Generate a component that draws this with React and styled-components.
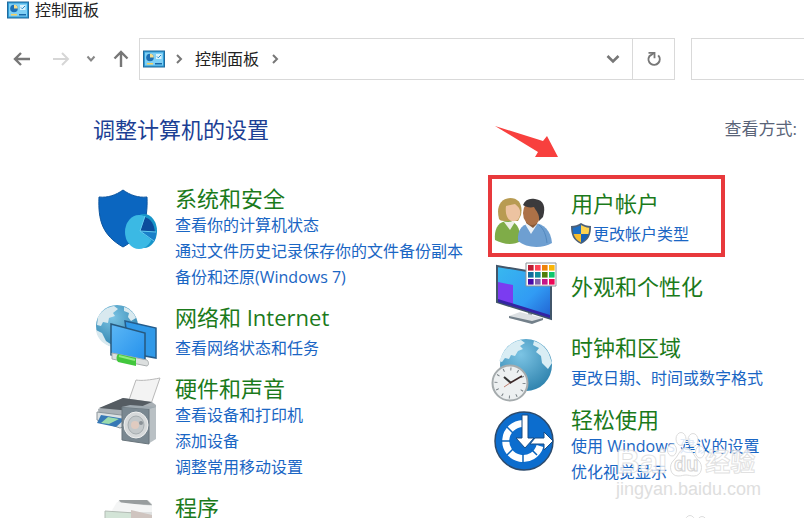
import React from "react";
import styled, { createGlobalStyle } from "styled-components";

const leftItems = [
  {
    id: "security",
    title: "系统和安全",
    icon: ShieldIcon,
    links: [
      "查看你的计算机状态",
      "通过文件历史记录保存你的文件备份副本",
      "备份和还原(Windows 7)",
    ],
  },
  {
    id: "network",
    title: "网络和 Internet",
    icon: NetworkIcon,
    links: ["查看网络状态和任务"],
  },
  {
    id: "hardware",
    title: "硬件和声音",
    icon: PrinterIcon,
    links: ["查看设备和打印机", "添加设备", "调整常用移动设置"],
  },
  { id: "programs", title: "程序", icon: ProgramsIcon, links: [] },
];

const rightItems = [
  {
    id: "users",
    title: "用户帐户",
    icon: UsersIcon,
    links: ["更改帐户类型"],
    admin: true,
    marked: true,
  },
  { id: "looks", title: "外观和个性化", icon: DisplayIcon, links: [] },
  {
    id: "clock",
    title: "时钟和区域",
    icon: ClockIcon,
    links: ["更改日期、时间或数字格式"],
  },
  {
    id: "ease",
    title: "轻松使用",
    icon: EaseIcon,
    links: ["使用 Windows 建议的设置", "优化视觉显示"],
  },
];

export default function App() {
  return (
    <Window>
      <GlobalStyle />
      <TitleBar>
        <PanelIcon />
        <span>控制面板</span>
      </TitleBar>
      <Toolbar>
        <NavButtons>
          <NavButton aria-label="后退">
            <svg width="22" height="16" viewBox="0 0 22 16">
              <path d="M17 8H2M8 2L2 8l6 6" stroke="#777" strokeWidth="2.4" fill="none" />
            </svg>
          </NavButton>
          <NavButton aria-label="前进" disabled>
            <svg width="18" height="16" viewBox="0 0 18 16">
              <path d="M1 8h15M10 2l6 6-6 6" stroke="#d6d6d6" strokeWidth="2" fill="none" />
            </svg>
          </NavButton>
          <NavButton aria-label="最近位置">
            <svg width="10" height="8" viewBox="0 0 10 8">
              <path d="M1.5 1.5L5 5.5l3.5-4" stroke="#888" strokeWidth="2" fill="none" />
            </svg>
          </NavButton>
          <NavButton aria-label="向上">
            <svg width="16" height="18" viewBox="0 0 16 18">
              <path d="M8 17V2M1.5 8.5L8 2l6.5 6.5" stroke="#777" strokeWidth="2.4" fill="none" />
            </svg>
          </NavButton>
        </NavButtons>
        <AddressBar>
          <PanelIcon />
          <Crumb />
          <CrumbButton>控制面板</CrumbButton>
          <Crumb />
          <DropButton aria-label="展开地址">
            <svg width="14" height="10" viewBox="0 0 14 10">
              <path d="M1.5 2L7 7.5 12.5 2" stroke="#777" strokeWidth="2.6" fill="none" />
            </svg>
          </DropButton>
          <RefreshButton aria-label="刷新">
            <svg width="16" height="16" viewBox="0 0 16 16">
              <path d="M12.2 4.4A5.6 5.6 0 1 1 3.4 5.2L8 2" stroke="#777" strokeWidth="2" fill="none" />
              <path d="M2.5 1.8h6v5.4" stroke="#777" strokeWidth="1.8" fill="none" />
            </svg>
          </RefreshButton>
        </AddressBar>
        <Search type="search" aria-label="搜索控制面板" />
      </Toolbar>
      <Content>
        <Header>
          <h1>调整计算机的设置</h1>
          <span>查看方式:</span>
        </Header>
        <Columns>
          <Column $gap="14px">
            {leftItems.map((item) => (
              <Item key={item.id} item={item} />
            ))}
          </Column>
          <Column $gap="15px" $top="5px" $center>
            {rightItems.map((item) => (
              <Item key={item.id} item={item} />
            ))}
          </Column>
        </Columns>
      </Content>
      <Watermark />
    </Window>
  );
}

function Item({ item }) {
  const Icon = item.icon;
  return (
    <Category>
      <Icon />
      <CategoryText $titleOnly={!item.links.length}>
        <CategoryTitle href="#" $spaced={item.links.length === 1}>
          {item.title}
        </CategoryTitle>
        {item.links.map((l) => (
          <TaskLink key={l} href="#">
            {item.admin && <UacShield />}
            {l}
          </TaskLink>
        ))}
      </CategoryText>
      {item.marked && (
        <>
          <Frame />
          <Arrow viewBox="0 0 66 34">
            <path d="M1 1L49 16 53 11 64 32 41 32 44 27Z" fill="#f8403e" />
          </Arrow>
        </>
      )}
    </Category>
  );
}

function Crumb() {
  return (
    <CrumbArrow viewBox="0 0 8 12">
      <path d="M2 2l4 4-4 4" stroke="#777" strokeWidth="2" fill="none" />
    </CrumbArrow>
  );
}

function PanelIcon() {
  return (
    <svg width="22" height="18" viewBox="0 0 22 18">
      <rect x=".5" y="1" width="21" height="16" fill="#2f9bd6" stroke="#216a9c" />
      <rect x="2" y="2.5" width="18" height="13" fill="#7fd0f5" />
      <circle cx="7" cy="7.5" r="3.8" fill="#1d6fb5" />
      <path d="M7 7.5V3.7a3.8 3.8 0 0 1 3.8 3.8z" fill="#f6dc8a" />
      <rect x="13" y="4" width="5.5" height="5" fill="#d9f2fd" />
      <path d="M14 6.5l1.3 1.3L18 5" stroke="#2489c9" fill="none" />
      <rect x="4" y="13" width="6" height="1.5" fill="#f3cf62" />
      <rect x="12" y="13" width="7" height="1.5" fill="#1869a8" />
    </svg>
  );
}

function UacShield() {
  return (
    <svg width="20" height="22" viewBox="0 0 20 22">
      <path d="M10 0C7 2 4 3 0 3c0 9 2 14 10 18 8-4 10-9 10-18-4 0-7-1-10-3z" fill="#4d6078" />
      <path d="M10 2C7.500 3.500 5 4.500 1.800 4.700c0 2.300.2 4.300.8 6.300H10z" fill="#1e6fc4" />
      <path d="M10 2c2.500 1.500 5 2.500 8.200 2.700 0 2.300-.2 4.300-.8 6.300H10z" fill="#ffd34f" />
      <path d="M2.600 11c1.100 3.700 3.300 6.500 7.400 8.500V11z" fill="#f9bd2c" />
      <path d="M17.400 11c-1.100 3.700-3.300 6.500-7.400 8.500V11z" fill="#1962b4" />
    </svg>
  );
}

function ShieldIcon() {
  return (
    <CategoryIcon viewBox="0 0 66 57">
      <path
        d="M30 5C23 10 15 13 6 12c-1 23 3 38 24 50 20-11 25-27 24-50-9 1-17-2-24-7z"
        fill="#0b66c0"
        stroke="#0c559f"
      />
      <ellipse cx="51" cy="46" rx="13" ry="17" fill="#1795c9" />
      <ellipse cx="46" cy="47" rx="14" ry="17" fill="#3bb9e4" />
      <path d="M47 46l5-14c6 2 9 7 10 15z" fill="#0c4c9c" />
      <path d="M47 46l16 1c0 4-1 7-2 10z" fill="#1a7fc8" />
      <path d="M52 31l-5 15 14 10M47 46l16 1" stroke="#62c9ee" fill="none" />
    </CategoryIcon>
  );
}

function NetworkIcon() {
  return (
    <CategoryIcon viewBox="0 0 66 57">
      <defs>
        <radialGradient id="globe" cx=".4" cy=".3" r=".8">
          <stop offset="0" stopColor="#7cc4e4" />
          <stop offset="1" stopColor="#287da9" />
        </radialGradient>
        <linearGradient id="screen" x1="0" y1="0" x2="1" y2="1">
          <stop offset="0" stopColor="#5cb7f5" />
          <stop offset="1" stopColor="#2390ec" />
        </linearGradient>
      </defs>
      <circle cx="24" cy="22" r="21" fill="url(#globe)" />
      <path d="M5 13C9 6 15 3 21 2l4 3-5 4 2 3-6 2-1 5-5-1-2 4-4-1zM31 3c6 2 10 6 12 11l-5 3-3-4 1-4-5-2zM3 26l6 3 4 8 6 4v2C11 41 4 35 3 26z" fill="#d8e9ef" />
      <path d="M32 17l31 7v30l-27-5z" fill="#3099e8" stroke="#255c8b" strokeWidth="1.5" />
      <path d="M18 20l34 9v29l-34-7z" fill="url(#screen)" stroke="#27587d" strokeWidth="1.5" />
      <path d="M19 49l35 7c2 2 2 5 0 6l-35-7z" fill="#dcdfdf" stroke="#a9aeaf" />
      <path d="M25 50l18 4v8l-18-4c-2-2-2-6 0-8z" fill="#42c73d" />
      <path d="M26 52l16 4" stroke="#91ed7e" strokeWidth="2" />
    </CategoryIcon>
  );
}

function PrinterIcon() {
  return (
    <CategoryIcon viewBox="0 0 66 57">
      <path d="M43 5c6 1 14 0 24-2L58 29 36 25z" fill="#f3f3f3" stroke="#b9b9b9" />
      <path d="M5 34l25-11 29 4 4 3v16L36 51 6 44z" fill="#a9b0b5" />
      <path d="M6 33l24-10 29 4-21 9z" fill="#555c62" />
      <path d="M4 37l32 4v9l-9 3-23-8z" fill="#dce1e3" stroke="#8b959b" />
      <path d="M8 40l24 4-9 8-19-4z" fill="#3678b5" />
      <path d="M15 42l11 2-10 5-8-1z" fill="#9bdbad" />
      <path d="M55 34l8-2v32l-8 5z" fill="#b9c0c4" />
      <path d="M29 32l27 2v35l-27-4z" fill="#7a8891" stroke="#69757c" />
      <path d="M29 32l8-2 26 2-7 2z" fill="#9ea9b0" />
      <ellipse cx="43" cy="50" rx="12" ry="13" fill="#d6d9da" stroke="#f0f1f1" />
      <ellipse cx="43" cy="50" rx="8" ry="9" fill="#c3c8ca" stroke="#a6adb0" />
      <circle cx="42" cy="50" r="4" fill="#e0cbc0" />
      <circle cx="48" cy="48" r="2" fill="#8a9196" />
    </CategoryIcon>
  );
}

function ProgramsIcon() {
  return (
    <CategoryIcon viewBox="0 0 66 57">
      <path d="M26 6h29l4 4v30H16z" fill="#dfe1e1" />
      <path d="M26 6h28l5 5-30-1z" fill="#989d9e" />
      <path d="M24 8l35 4v6H18z" fill="#f4f5f5" />
      <path d="M12 17l30 2v20H12z" fill="#d3e4d7" stroke="#b3bcb5" />
      <path d="M38 16l21 5v20H38z" fill="#cfc4bf" />
    </CategoryIcon>
  );
}

function UsersIcon() {
  return (
    <CategoryIcon viewBox="0 0 66 57">
      <path d="M6 50c-1-11 3-19 13-19 8 0 12 6 13 20-8 5-19 3-26-1z" fill="#7fac48" />
      <path d="M15 32l6 8 5-8z" fill="#eef0e6" />
      <path d="M10 29C7 17 11 9 21 8c9 0 13 7 11 17l-3 6H15c-3 0-4-1-5-2z" fill="#b89b52" />
      <path d="M17 16l9-2c4 3 6 6 5 11-1 5-4 7-8 6-5-1-7-8-6-15z" fill="#edc3a1" />
      <path d="M29 51c-1-12 5-18 15-18 11 0 18 8 19 20-10 6-26 5-34-2z" fill="#6e9fd1" />
      <path d="M36 34l6 10 7-11z" fill="#ecf2f7" />
      <path d="M38 29l11-2-1 7-4 4-7-5z" fill="#895a38" />
      <ellipse cx="43" cy="23" rx="9" ry="12" fill="#ac7147" />
      <path d="M34 15c2-5 6-7 12-6 9 1 11 8 8 18l-4 4c1-7-3-10-5-14-4 1-8 0-11-2z" fill="#3b3a3c" />
      <path d="M50 35c5 4 7 10 8 18" stroke="#5288be" fill="none" />
    </CategoryIcon>
  );
}

function DisplayIcon() {
  const colors = [
    "#bd1c32", "#ff4457", "#ee8208", "#f9b507",
    "#116c9d", "#108f9d", "#4e7e0c", "#10c66b",
    "#4607a8", "#8160aa", "#c41788", "#ed0757",
  ];
  return (
    <CategoryIcon viewBox="0 0 66 57">
      <defs>
        <linearGradient id="display" x1="0" y1="0" x2="1" y2="1">
          <stop offset="0" stopColor="#38b9ef" />
          <stop offset=".6" stopColor="#319bf4" />
          <stop offset="1" stopColor="#205fd0" />
        </linearGradient>
      </defs>
      <path d="M39 48l4-1v10h-4z" fill="#9ca7ae" />
      <path d="M20 54l11-4 23 6-11 5-23-5z" fill="#dce0e3" />
      <path d="M20 54l23 5 11-3v2l-11 4-23-6z" fill="#73808a" />
      <path d="M8 4l54 9v44L8 40z" fill="url(#display)" stroke="#42566a" strokeWidth="2" />
      <path d="M9 20l15 3v21L9 38z" fill="#7b3cf0" />
      <path d="M9 37l52 16v3L9 40z" fill="#3324a4" />
      <path d="M37 1h30v23H37z" fill="#fff" stroke="#8b9299" />
      {colors.map((c, i) => (
        <rect key={i} x={39 + (i % 4) * 7} y={3 + Math.floor(i / 4) * 7} width="5.600" height="5.600" fill={c} />
      ))}
    </CategoryIcon>
  );
}

function ClockIcon() {
  return (
    <CategoryIcon viewBox="0 0 66 57">
      <circle cx="37" cy="31" r="26" fill="url(#globe)" />
      <path d="M14 19C19 11 25 7 32 6l4 3-5 3 3 3-5 2-3 5-4-1-2 4-4-1-3 4-3-1zM45 7c7 2 12 7 15 13l3 9-4 6-6-6-1-7-5-4 3-4-6-3z" fill="#d9edf4" />
      <circle cx="21" cy="49" r="17.500" fill="#edf0f1" stroke="#a5abad" strokeWidth="2" />
      <circle cx="21" cy="49" r="14" fill="none" stroke="#777f84" strokeWidth="3" strokeDasharray="1 6.330" />
      <path d="M15 43l7 6" stroke="#333" strokeWidth="2" />
      <path d="M21 49l12-7" stroke="#3d2929" strokeWidth="1.500" />
      <path d="M15 53l6-4" stroke="#bc7c6c" />
    </CategoryIcon>
  );
}

function EaseIcon() {
  return (
    <CategoryIcon viewBox="0 0 66 57">
      <circle cx="35" cy="24" r="29" fill="#0c6dce" stroke="#2c4a6c" strokeWidth="1.5" />
      <path d="M34 6.500A17.500 17.500 0 1 0 51 29" fill="none" stroke="#fff" strokeWidth="7" />
      <path d="M12 24h9M18 10l6 6M18 38l6-6M34 46v-9M48 38l-6-6" stroke="#0b64bb" strokeWidth="1.5" />
      <path d="M33-2h6v23h6L36 31l-9-10h6z" fill="#fff" stroke="#174d86" />
      <path d="M46 21h9v-6l9 9-9 9v-6H41z" fill="#fff" stroke="#174d86" />
    </CategoryIcon>
  );
}

function Watermark() {
  return (
    <Mark aria-hidden="true">
      <MarkRow>
        <MarkText $size="33px">Bai</MarkText>
        <Paw>
          <svg width="38" height="46" viewBox="0 0 38 46">
            <g fill="#fff" fillOpacity=".85" stroke="#ddd">
              <ellipse cx="14" cy="7" rx="5" ry="6.500" />
              <ellipse cx="26" cy="8" rx="5" ry="6.500" />
              <ellipse cx="5" cy="18" rx="4.500" ry="6" />
              <ellipse cx="33" cy="20" rx="4.500" ry="6" />
              <path d="M19 16c6 0 7 7 12 12 6 5 4 16-4 16-4 0-5-1-8-1s-4 1-8 1c-8 0-10-11-4-16 5-5 6-12 12-12z" />
            </g>
          </svg>
          <span>du</span>
        </Paw>
        <MarkText $size="25px">经验</MarkText>
      </MarkRow>
      <MarkUrl>jingyan.baidu.com</MarkUrl>
      <NextMark viewBox="0 0 38 46">
        <g fill="#fff" stroke="#ddd">
          <ellipse cx="14" cy="7" rx="5" ry="6.500" />
          <ellipse cx="26" cy="8" rx="5" ry="6.500" />
        </g>
      </NextMark>
    </Mark>
  );
}

const GlobalStyle = createGlobalStyle`
  * {
    box-sizing: border-box;
  }
  body {
    margin: 0;
    background: #fff;
    color: #222;
    font-family: "Open Sans", "Noto Sans CJK SC", sans-serif;
    font-size: 16px;
  }
  svg {
    flex-shrink: 0;
  }
`;

const Window = styled.div`
  position: relative;
  height: 100vh;
  overflow: hidden;
`;

const TitleBar = styled.div`
  display: flex;
  align-items: center;
  gap: 6px;
  height: 20px;
  padding-left: 7px;
  line-height: 20px;
`;

const Toolbar = styled.div`
  display: flex;
  align-items: center;
  margin-top: 18px;
`;

const NavButtons = styled.div`
  display: flex;
  align-items: center;
  justify-content: space-between;
  width: 139px;
  padding: 0 10px 0 13px;
`;

const NavButton = styled.button`
  display: flex;
  padding: 0;
  border: 0;
  background: none;
`;

const AddressBar = styled.div`
  flex: 1;
  display: flex;
  align-items: center;
  height: 42px;
  padding-left: 3px;
  border: 1px solid #d9d9d9;
`;

const CrumbArrow = styled.svg`
  width: 8px;
  height: 12px;
  margin: 0 10px;
`;

const CrumbButton = styled.button`
  padding: 0 2px;
  border: 0;
  background: none;
  color: #222;
  font: inherit;
  line-height: 24px;
`;

const DropButton = styled(NavButton)`
  margin-left: auto;
  padding: 0 12px;
`;

const RefreshButton = styled(NavButton)`
  align-items: center;
  justify-content: center;
  width: 42px;
  height: 100%;
  border-left: 1px solid #d9d9d9;
`;

const Search = styled.input`
  width: 14%;
  height: 42px;
  margin-left: 16px;
  border: 1px solid #d9d9d9;
  border-right: 0;
  background: #fff;
`;

const Content = styled.main`
  padding: 34px 7px 0 93px;
`;

const Header = styled.header`
  display: flex;
  align-items: center;
  justify-content: space-between;
  margin-bottom: 41px;
  color: #5a6478;
  font-size: 17px;
  line-height: 30px;
  h1 {
    margin: 0;
    color: #1c3f94;
    font-size: 22px;
    font-weight: 400;
  }
`;

const Columns = styled.div`
  display: grid;
  grid-template-columns: 9fr 7fr;
`;

const Category = styled.section`
  position: relative;
  display: grid;
  grid-template-columns: 66px 1fr;
  column-gap: 16px;
`;

const Column = styled.div`
  display: flex;
  flex-direction: column;
  gap: ${(p) => p.$gap};
  padding-top: ${(p) => p.$top || 0};
  ${Category} {
    align-items: ${(p) => (p.$center ? "center" : "start")};
  }
`;

const CategoryIcon = styled.svg`
  width: 66px;
  height: 57px;
  overflow: visible;
`;

const CategoryText = styled.div`
  display: flex;
  flex-direction: column;
  align-items: flex-start;
  padding-bottom: ${(p) => (p.$titleOnly ? "8px" : 0)};
  white-space: nowrap;
`;

const CategoryTitle = styled.a`
  margin-bottom: ${(p) => (p.$spaced ? "4px" : 0)};
  color: #1b7a1b;
  font-size: 22px;
  line-height: 27px;
  text-decoration: none;
`;

const TaskLink = styled.a`
  display: flex;
  align-items: center;
  gap: 2px;
  color: #1a66c4;
  line-height: 26px;
  text-decoration: none;
`;

const Frame = styled.div`
  position: absolute;
  top: -15px;
  left: -1px;
  width: 237px;
  height: 82px;
  border: 4px solid #e8393c;
`;

const Arrow = styled.svg`
  position: absolute;
  top: -65px;
  left: 5px;
  width: 66px;
  height: 34px;
`;

const Mark = styled.div`
  position: absolute;
  right: 43px;
  bottom: 18px;
  font-family: "Liberation Sans", "Noto Sans CJK SC", sans-serif;
`;

const MarkRow = styled.div`
  display: flex;
  align-items: flex-end;
`;

const MarkText = styled.span`
  color: rgba(255, 255, 255, 0.8);
  font-size: ${(p) => p.$size};
  font-weight: 700;
  line-height: 32px;
  -webkit-text-stroke: 1px rgba(205, 205, 205, 0.6);
`;

const Paw = styled.div`
  position: relative;
  display: flex;
  span {
    position: absolute;
    bottom: 2px;
    width: 100%;
    color: #fff;
    font-size: 20px;
    font-weight: 700;
    line-height: 24px;
    text-align: center;
    -webkit-text-stroke: 1px #d4d4d4;
  }
`;

const MarkUrl = styled.div`
  color: #dedede;
  font-size: 18px;
  line-height: 22px;
`;

const NextMark = styled.svg`
  position: absolute;
  top: 83px;
  left: 60px;
  width: 38px;
  height: 46px;
`;
